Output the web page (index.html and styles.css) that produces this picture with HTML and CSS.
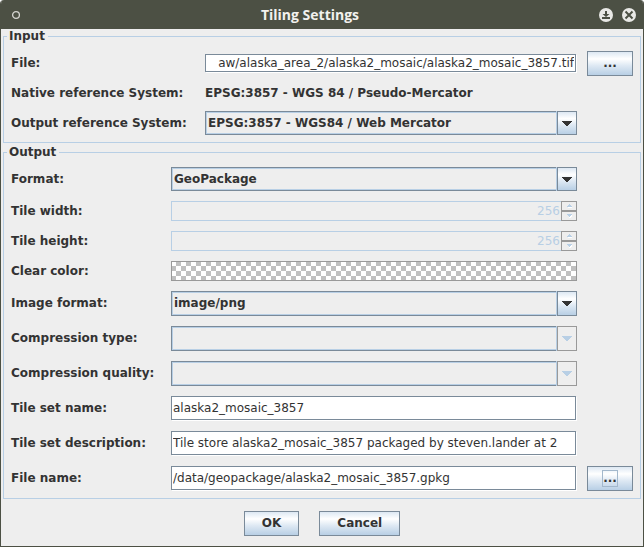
FILE: index.html
```html
<!DOCTYPE html>
<html lang="en">
<head>
<meta charset="utf-8">
<title>Tiling Settings</title>
<link rel="stylesheet" href="styles.css">
</head>
<body>
<main class="window">
  <header class="titlebar">
    <svg class="menu-icon" viewBox="0 0 10 10" aria-hidden="true"><circle cx="5" cy="5" r="3.4"/></svg>
    <h1>Tiling Settings</h1>
    <div class="window-buttons">
      <button type="button" aria-label="Minimize">
        <svg viewBox="0 0 14 14"><circle cx="7" cy="7" r="7"/><path class="solid" d="M6 3h2v3h2.500L7 9 3.500 6H6zM3 9h8v2H3z"/></svg>
      </button>
      <button type="button" aria-label="Close">
        <svg viewBox="0 0 14 14"><circle cx="7" cy="7" r="7"/><path class="cross" d="M3.500 3.500l7 7M10.500 3.500l-7 7"/></svg>
      </button>
    </div>
  </header>
  <form class="content">
    <fieldset>
      <legend>Input</legend>
      <div class="grid input-grid">
        <label for="file">File:</label>
        <input class="text compact" id="file" type="text" value="aw/alaska_area_2/alaska2_mosaic/alaska2_mosaic_3857.tif">
        <button class="push" type="button" aria-label="Browse input file">...</button>

        <span>Native reference System:</span>
        <output class="wide">EPSG:3857 - WGS 84 / Pseudo-Mercator</output>

        <label for="srs">Output reference System:</label>
        <div class="combo short"><select id="srs"><option>EPSG:3857 - WGS84 / Web Mercator</option></select><span class="arrow"><svg viewBox="0 0 10 5"><path d="M0 0h10v1H9v1H8v1H7v1H6v1H4V4H3V3H2V2H1V1H0z"/></svg></span></div>
      </div>
    </fieldset>

    <fieldset>
      <legend>Output</legend>
      <div class="grid output-grid">
        <label for="format">Format:</label>
        <div class="combo short"><select id="format"><option>GeoPackage</option></select><span class="arrow"><svg viewBox="0 0 10 5"><path d="M0 0h10v1H9v1H8v1H7v1H6v1H4V4H3V3H2V2H1V1H0z"/></svg></span></div>

        <label for="tile-width">Tile width:</label>
        <div class="spinner">
          <input id="tile-width" type="number" value="256" disabled>
          <div class="steps">
            <button type="button" aria-label="Increase width" disabled><svg viewBox="0 0 5 4"><path class="shade" d="M1 3h4v1H1z"/><path d="M2 0h1v1h1v1h1v1H0V2h1V1h1z"/></svg></button>
            <button type="button" aria-label="Decrease width" disabled><svg viewBox="0 0 5 4"><path class="shade" d="M3 2h2V1h-1v1H3v1H2v1h2V3h1V2z"/><path d="M0 0h5v1H4v1H3v1H2V2H1V1H0z"/></svg></button>
          </div>
        </div>

        <label for="tile-height">Tile height:</label>
        <div class="spinner">
          <input id="tile-height" type="number" value="256" disabled>
          <div class="steps">
            <button type="button" aria-label="Increase height" disabled><svg viewBox="0 0 5 4"><path class="shade" d="M1 3h4v1H1z"/><path d="M2 0h1v1h1v1h1v1H0V2h1V1h1z"/></svg></button>
            <button type="button" aria-label="Decrease height" disabled><svg viewBox="0 0 5 4"><path class="shade" d="M3 2h2V1h-1v1H3v1H2v1h2V3h1V2z"/><path d="M0 0h5v1H4v1H3v1H2V2H1V1H0z"/></svg></button>
          </div>
        </div>

        <label for="clear-color">Clear color:</label>
        <button class="swatch" id="clear-color" type="button"></button>

        <label for="image-format">Image format:</label>
        <div class="combo"><select id="image-format"><option>image/png</option></select><span class="arrow"><svg viewBox="0 0 10 5"><path d="M0 0h10v1H9v1H8v1H7v1H6v1H4V4H3V3H2V2H1V1H0z"/></svg></span></div>

        <label for="compression-type">Compression type:</label>
        <div class="combo off"><select id="compression-type" disabled></select><span class="arrow"><svg viewBox="0 0 10 5"><path d="M0 0h10v1H9v1H8v1H7v1H6v1H4V4H3V3H2V2H1V1H0z"/></svg></span></div>

        <label for="compression-quality">Compression quality:</label>
        <div class="combo off"><select id="compression-quality" disabled></select><span class="arrow"><svg viewBox="0 0 10 5"><path d="M0 0h10v1H9v1H8v1H7v1H6v1H4V4H3V3H2V2H1V1H0z"/></svg></span></div>

        <label for="set-name">Tile set name:</label>
        <input class="text" id="set-name" type="text" value="alaska2_mosaic_3857">

        <label for="set-description">Tile set description:</label>
        <input class="text" id="set-description" type="text" value="Tile store alaska2_mosaic_3857 packaged by steven.lander at 2">

        <label for="file-name">File name:</label>
        <input class="text" id="file-name" type="text" value="/data/geopackage/alaska2_mosaic_3857.gpkg">
        <button class="push" type="button" aria-label="Browse output file"><span class="focus">...</span></button>
      </div>
    </fieldset>

    <div class="actions">
      <button class="push" type="button">OK</button>
      <button class="push" type="button">Cancel</button>
    </div>
  </form>
</main>
</body>
</html>
```
FILE: styles.css
```css
:root {
  --frame: #4c5044;
  --panel: #eeeeee;
  --ink: #333333;
  --edge: #7a8a99;
  --soft: #b8cfe5;
  --muted: #999999;
  --metal: linear-gradient(#dde8f3, #ffffff 30%, #dde8f3 60%, #b8cfe5);
}

* {
  box-sizing: border-box;
}

body {
  margin: 0;
  background: #ffffff;
  color: var(--ink);
  font: bold 12px/15px "DejaVu Sans", sans-serif;
}

input,
select,
button {
  margin: 0;
  border-radius: 0;
  color: inherit;
  font: inherit;
}

.window {
  min-height: 100vh;
  border: solid var(--frame);
  border-width: 0 1px 1px;
  border-radius: 4px 4px 0 0;
  background: var(--panel);
  overflow: hidden;
}

.titlebar {
  display: flex;
  align-items: center;
  height: 29px;
  padding: 0 7px 0 10px;
  background: var(--frame);
}

.titlebar h1 {
  flex: 1;
  margin: 0;
  color: #f2f1ee;
  font: 700 14px/20px "Open Sans", sans-serif;
  text-align: center;
}

.menu-icon {
  width: 10px;
  height: 10px;
  fill: none;
  stroke: #d5d5d0;
  stroke-width: 1.3;
}

.window-buttons {
  display: flex;
  gap: 9px;
}

.window-buttons button {
  width: 14px;
  height: 14px;
  padding: 0;
  border: 0;
  background: none;
}

.window-buttons svg {
  display: block;
  fill: #e9e9e6;
}

.window-buttons .solid {
  fill: var(--frame);
}

.window-buttons .cross {
  stroke: var(--frame);
  stroke-width: 2;
}

.content {
  padding: 0 2px 10px;
}

fieldset {
  min-width: 0;
  margin: 0 0 2px;
  padding: 0;
  border: 1px solid var(--soft);
}

legend {
  margin-left: 3px;
  padding: 0 3px 0 2px;
}

.grid {
  display: grid;
  gap: 10px;
  align-items: center;
  padding: 7px;
}

.input-grid {
  grid-template-columns: 184px 1fr 46px;
}

.output-grid {
  grid-template-columns: 150px 1fr 46px;
}

.grid > label,
.grid > span {
  grid-column: 1;
  white-space: nowrap;
}

.wide {
  grid-column: 2 / 4;
}

.text {
  width: calc(100% - 1px);
  min-width: 0;
  height: 24px;
  margin-bottom: 1px;
  padding: 0 1px;
  border: 1px solid var(--edge);
  background: #ffffff;
  box-shadow: 1px 1px 0 #ffffff;
  font-weight: normal;
  outline: none;
}

.compact {
  height: 18px;
  text-align: right;
}

.push {
  height: 25px;
  padding: 0;
  border: 1px solid var(--edge);
  background: var(--metal);
}

.focus {
  display: inline-block;
  border: 1px solid #a3b8cc;
}

.combo {
  display: flex;
  position: relative;
  height: 25px;
}

.short {
  height: 24px;
}

.combo select {
  flex: 1;
  min-width: 0;
  padding: 0 22px 0 2px;
  border: 1px solid var(--edge);
  background: transparent;
  box-shadow: inset 0 0 0 1px var(--soft);
  appearance: none;
  opacity: 1;
}

.arrow {
  display: flex;
  align-items: center;
  justify-content: center;
  position: absolute;
  inset: 0 0 0 auto;
  width: 20px;
  border: 1px solid var(--edge);
  background: var(--metal);
  box-shadow: -1px 0 0 var(--soft);
  pointer-events: none;
}

.arrow svg {
  width: 10px;
  height: 5px;
  fill: var(--ink);
  shape-rendering: crispEdges;
}

.off .arrow {
  border-color: var(--muted);
  background: var(--panel);
}

.off .arrow svg {
  fill: var(--soft);
}

.spinner {
  display: flex;
  height: 20px;
}

.spinner input {
  flex: 1;
  min-width: 0;
  padding: 0 1px 0 0;
  border: 1px solid var(--soft);
  border-right: 0;
  background: transparent;
  color: var(--soft);
  font-weight: normal;
  text-align: right;
  appearance: textfield;
}

.spinner input::-webkit-inner-spin-button {
  margin: 0;
  appearance: none;
}

.steps {
  display: flex;
  flex-direction: column;
  width: 16px;
}

.steps button {
  display: flex;
  flex: 1;
  align-items: center;
  justify-content: center;
  padding: 0;
  border: 1px solid var(--muted);
  background: transparent;
}

.steps svg {
  width: 5px;
  height: 4px;
  fill: var(--soft);
  shape-rendering: crispEdges;
}

.steps .shade {
  fill: #ffffff;
}

.swatch {
  height: 20px;
  border: 1px solid var(--muted);
  background: conic-gradient(#c0c0c0 25%, #ffffff 0 50%, #c0c0c0 0 75%, #ffffff 0) border-box;
  background-size: 10px 10px;
}

.actions {
  display: flex;
  justify-content: center;
  gap: 20px;
  padding-top: 10px;
}

.actions .push {
  padding: 0 17px;
}
```
